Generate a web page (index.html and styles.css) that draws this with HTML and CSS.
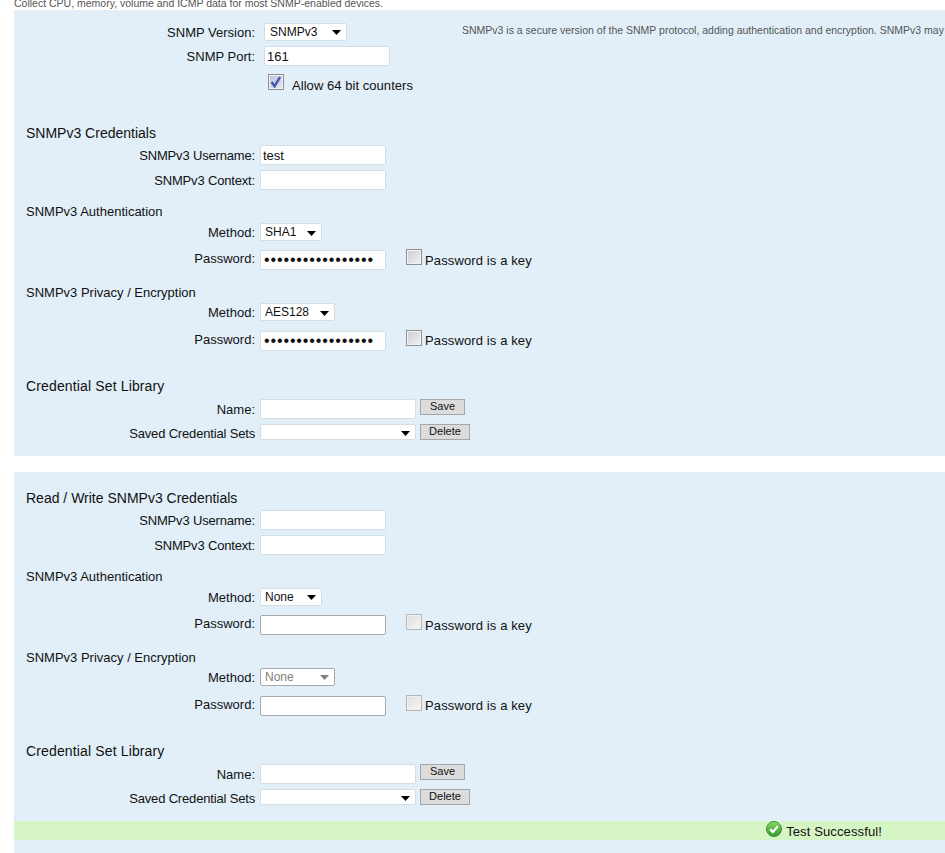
FILE: index.html
```html
<!DOCTYPE html>
<html lang="en">
<head>
<meta charset="utf-8">
<title>SNMP settings</title>
<link rel="stylesheet" href="styles.css">
</head>
<body>
<div class="intro"><p>Collect CPU, memory, volume and ICMP data for most SNMP-enabled devices.</p></div>

<section class="panel panel-main">
  <div class="row row-select row-top">
    <label class="field-label">SNMP Version:</label>
    <span class="select-wrap w-version"><select class="select select-version"><option>SNMPv3</option></select><svg class="arrow" width="9" height="5" viewBox="0 0 9 5"><path d="M0 0h9L4.5 5z"/></svg></span>
    <p class="help">SNMPv3 is a secure version of the SNMP protocol, adding authentication and encryption. SNMPv3 may</p>
  </div>
  <div class="row row-input row-port">
    <label class="field-label">SNMP Port:</label>
    <input class="input w-port" type="text" value="161">
  </div>
  <div class="row row-counter">
    <span class="check-wrap"><input class="check check-on" type="checkbox" checked><svg class="tick" width="16" height="16" viewBox="0 0 16 16"><path d="M3.6 8l3 4.2L12 3.2" fill="none" stroke="#4658a8" stroke-width="2.4"/></svg></span>
    <span class="check-text">Allow 64 bit counters</span>
  </div>

  <h3 class="heading h-cred">SNMPv3 Credentials</h3>
  <div class="row row-input m4"><label class="field-label tight">SNMPv3 Username:</label><input class="input w-field" type="text" value="test"></div>
  <div class="row row-input m5"><label class="field-label tight">SNMPv3 Context:</label><input class="input w-field" type="text"></div>

  <h3 class="heading h-auth">SNMPv3 Authentication</h3>
  <div class="row row-select m4"><label class="field-label">Method:</label><span class="select-wrap w-sha"><select class="select"><option>SHA1</option></select><svg class="arrow arrow-low" width="9" height="5" viewBox="0 0 9 5"><path d="M0 0h9L4.5 5z"/></svg></span></div>
  <div class="row row-input m9"><label class="field-label label-up">Password:</label><input class="input w-field pass" type="password" value="aaaaaaaaaaaaaaaaa"><input class="check check-key" type="checkbox"><span class="key-text">Password is a key</span></div>

  <h3 class="heading h-priv">SNMPv3 Privacy / Encryption</h3>
  <div class="row row-select m3"><label class="field-label">Method:</label><span class="select-wrap w-aes"><select class="select"><option>AES128</option></select><svg class="arrow arrow-low" width="9" height="5" viewBox="0 0 9 5"><path d="M0 0h9L4.5 5z"/></svg></span></div>
  <div class="row row-input m10"><label class="field-label label-up">Password:</label><input class="input w-field pass" type="password" value="aaaaaaaaaaaaaaaaa"><input class="check check-key" type="checkbox"><span class="key-text key-up">Password is a key</span></div>

  <h3 class="heading h-lib">Credential Set Library</h3>
  <div class="row row-input m5"><label class="field-label">Name:</label><input class="input w-name" type="text"><button class="btn btn-save" type="button">Save</button></div>
  <div class="row row-saved m5"><label class="field-label tight label-down">Saved Credential Sets</label><span class="select-wrap w-name"><select class="select"><option></option></select><svg class="arrow" width="9" height="5" viewBox="0 0 9 5"><path d="M0 0h9L4.5 5z"/></svg></span><button class="btn btn-delete" type="button">Delete</button></div>
</section>

<section class="panel panel-rw">
  <h3 class="heading">Read / Write SNMPv3 Credentials</h3>
  <div class="row row-input m4"><label class="field-label tight">SNMPv3 Username:</label><input class="input w-field" type="text"></div>
  <div class="row row-input m5"><label class="field-label tight">SNMPv3 Context:</label><input class="input w-field" type="text"></div>

  <h3 class="heading h-auth">SNMPv3 Authentication</h3>
  <div class="row row-select m4"><label class="field-label">Method:</label><span class="select-wrap w-sha"><select class="select"><option>None</option></select><svg class="arrow" width="9" height="5" viewBox="0 0 9 5"><path d="M0 0h9L4.5 5z"/></svg></span></div>
  <div class="row row-input m9"><label class="field-label label-up">Password:</label><input class="input w-field is-off" type="password"><input class="check check-key check-off" type="checkbox"><span class="key-text">Password is a key</span></div>

  <h3 class="heading h-priv">SNMPv3 Privacy / Encryption</h3>
  <div class="row row-select m3"><label class="field-label">Method:</label><span class="select-wrap w-aes"><select class="select select-off" disabled><option>None</option></select><svg class="arrow arrow-off" width="9" height="5" viewBox="0 0 9 5"><path d="M0 0h9L4.5 5z"/></svg></span></div>
  <div class="row row-input m10"><label class="field-label label-up">Password:</label><input class="input w-field is-off" type="password"><input class="check check-key check-off" type="checkbox"><span class="key-text key-up">Password is a key</span></div>

  <h3 class="heading h-lib">Credential Set Library</h3>
  <div class="row row-input m5"><label class="field-label">Name:</label><input class="input w-name" type="text"><button class="btn btn-save" type="button">Save</button></div>
  <div class="row row-saved m5"><label class="field-label tight label-down">Saved Credential Sets</label><span class="select-wrap w-name"><select class="select"><option></option></select><svg class="arrow" width="9" height="5" viewBox="0 0 9 5"><path d="M0 0h9L4.5 5z"/></svg></span><button class="btn btn-delete" type="button">Delete</button></div>

  <div class="status">
    <svg class="status-icon" width="16" height="16" viewBox="0 0 16 16"><defs><linearGradient id="ok" x1="0" y1="0" x2="0" y2="1"><stop offset="0" stop-color="#8fd867"/><stop offset="1" stop-color="#2f9a2a"/></linearGradient></defs><circle cx="8" cy="8" r="7.5" fill="url(#ok)" stroke="#3d8f3a"/><path d="M4.2 8.2l2.7 2.8 4.9-5.8" fill="none" stroke="#fff" stroke-width="2.2"/></svg>
    <span class="status-text">Test Successful!</span>
  </div>
</section>
</body>
</html>
```
FILE: styles.css
```css
html, body {
  margin: 0;
  padding: 0;
  height: 853px;
  overflow: hidden;
  background: #fff;
}
body {
  font-family: "Liberation Sans", Arial, sans-serif;
  font-size: 13px;
  color: #111;
}
.intro {
  height: 10px;
  overflow: hidden;
  padding-left: 14px;
}
.intro p {
  margin: -4px 0 0;
  font-size: 10.5px;
  line-height: 14px;
  color: #555;
  white-space: nowrap;
}
.panel {
  margin-left: 14px;
  padding-left: 12px;
  background: #e2eff8;
  overflow: hidden;
}
.panel-main {
  padding-top: 13px;
  padding-bottom: 16px;
}
.panel-rw {
  margin-top: 16px;
  padding-top: 18px;
  height: 381px;
  box-sizing: border-box;
}
.heading {
  margin: 0;
  height: 16px;
  line-height: 16px;
  font-size: 14px;
  font-weight: normal;
  white-space: nowrap;
}
.h-cred { margin-top: 35px; }
.h-auth { margin-top: 13px; font-size: 13px; line-height: 18px; }
.h-priv { margin-top: 14px; font-size: 13px; line-height: 18px; }
.h-lib { margin-top: 27px; letter-spacing: 0.14px; }
.row {
  display: flex;
  align-items: center;
  white-space: nowrap;
}
.row-select { height: 18px; }
.row-input { height: 20px; }
.row-saved { height: 16px; }
.m3 { margin-top: 3px; }
.m4 { margin-top: 4px; }
.m5 { margin-top: 5px; }
.m9 { margin-top: 9px; }
.m10 { margin-top: 10px; }
.field-label {
  flex: none;
  width: 229px;
  margin-right: 5px;
  text-align: right;
  font-size: 13px;
}
.tight { letter-spacing: -0.17px; }
.label-up { position: relative; top: -2px; }
.label-down { position: relative; top: 1px; }
.row-top .field-label,
.row-port .field-label { margin-right: 9px; }
.row-port { margin-top: 5px; }
.row-counter {
  margin-top: 8px;
  height: 16px;
  padding-left: 242px;
}
.check-wrap {
  position: relative;
  display: block;
  flex: none;
  width: 16px;
  height: 16px;
}
.tick {
  position: absolute;
  left: 0;
  top: 0;
  pointer-events: none;
}
.check-text {
  margin-left: 8px;
  position: relative;
  top: 3px;
  letter-spacing: 0.05px;
}
.input {
  flex: none;
  box-sizing: border-box;
  height: 20px;
  margin: 0;
  padding: 0 1px 0 2px;
  border: 1px solid #d3dde4;
  border-radius: 2px;
  background: #fff;
  font: 13px "Liberation Sans", Arial, sans-serif;
  color: #111;
  outline: none;
}
.is-off { border-color: #a9a9a9; }
.pass {
  font-size: 16px;
  letter-spacing: 0.87px;
  padding-left: 3px;
}
.w-port { width: 126px; }
.w-field { width: 126px; }
.w-name { width: 156px; }
.w-version { width: 83px; }
.w-sha { width: 62px; }
.w-aes { width: 75px; }
.select-wrap {
  position: relative;
  display: block;
  flex: none;
  height: 100%;
}
.select {
  display: block;
  appearance: none;
  -webkit-appearance: none;
  box-sizing: border-box;
  width: 100%;
  height: 100%;
  margin: 0;
  padding: 0 0 0 4px;
  border: 1px solid #d3dde4;
  border-radius: 2px;
  background: #fff;
  font: 12px "Liberation Sans", Arial, sans-serif;
  color: #111;
}
.select-version { padding-left: 5px; }
.select-off {
  border-color: #a9a9a9;
  color: #7f7f7f;
  opacity: 1;
}
.arrow {
  position: absolute;
  right: 6px;
  top: 7px;
  fill: #000;
  pointer-events: none;
}
.arrow-low { top: 8px; }
.arrow-off { fill: #808080; }
.check {
  appearance: none;
  -webkit-appearance: none;
  display: block;
  flex: none;
  box-sizing: border-box;
  width: 16px;
  height: 16px;
  margin: 0;
  border: 1px solid #8f8f8f;
  box-shadow: inset 0 0 0 1px #f2f2f2;
  background: linear-gradient(135deg, #c9c9d0, #f4f4f6);
}
.check-on { background: linear-gradient(135deg, #bcc0dc, #e6e8f4); }
.check-off {
  border-color: #b5b5b5;
  background: linear-gradient(135deg, #dedede, #f6f6f6);
}
.check-key {
  margin-left: 20px;
  position: relative;
  top: -3px;
}
.key-text {
  margin-left: 3px;
  letter-spacing: 0.12px;
}
.key-up { position: relative; top: -1px; }
.help {
  margin: 0 0 0 115px;
  font-size: 10.5px;
  color: #555;
  position: relative;
  top: -2px;
}
.btn {
  flex: none;
  box-sizing: border-box;
  height: 16px;
  margin: 0 0 0 4px;
  padding: 0 0 3px;
  border: 1px solid #a6a6a6;
  background: #dcdcdc;
  font: 11px "Liberation Sans", Arial, sans-serif;
  color: #111;
  line-height: 12px;
}
.btn-save { width: 45px; align-self: flex-start; }
.btn-delete { width: 50px; }
.status {
  margin: 16px 0 0 -12px;
  height: 19px;
  background: #d6f5c4;
  display: flex;
  align-items: center;
  justify-content: flex-end;
  padding-right: 63px;
}
.status-icon {
  position: relative;
  top: -2px;
  margin-right: 4px;
}
.status-text { position: relative; top: 1px; letter-spacing: 0.12px; }
```
